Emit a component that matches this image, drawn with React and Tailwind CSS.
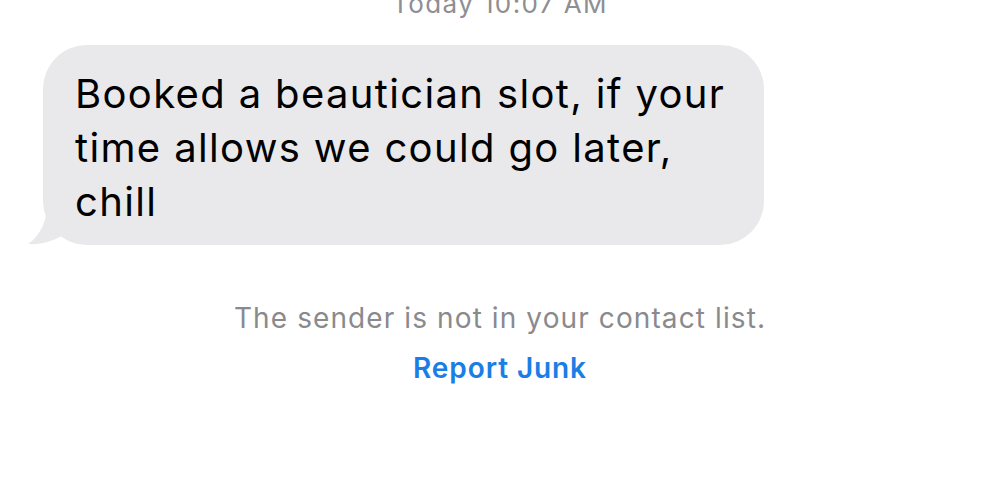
import React from "react";

export default function App() {
    return (
        <div className="w-[1000px] h-[497px] bg-white overflow-hidden flex flex-col" style={{ fontFamily: "Inter, 'Liberation Sans', sans-serif" }}>
            <div className="-mt-[13px] h-[34px] text-center text-[26px] leading-[34px] tracking-[1.4px] text-[#8e8e93]">
                Today 10:07 AM
            </div>
            <div className="mt-[24px] pl-[43px]">
                <div className="relative w-[721px] h-[200px] bg-[#e9e9eb] rounded-[44px] pl-[32px] pt-[22px]">
                    <svg
                        className="absolute left-[-16px] bottom-0"
                        width="50"
                        height="42"
                        viewBox="0 0 50 42"
                    >
                        <path d="M20 0 C20 18 14 32 1 41 C14 42 26 38 34 33 C40 36 45 38 50 40 L50 0 Z" fill="#e9e9eb" />
                    </svg>
                    <div className="relative text-[40px] leading-[54px] text-black tracking-[1.35px]">
                        <div className="whitespace-nowrap">Booked a beautician slot, if your</div>
                        <div className="whitespace-nowrap">time allows we could go later,</div>
                        <div className="whitespace-nowrap">chill</div>
                    </div>
                </div>
            </div>
            <div className="mt-[56px] text-center text-[28px] leading-[34px] tracking-[1.1px] text-[#8a8a8e]">
                The sender is not in your contact list.
            </div>
            <div className="mt-[16px] text-center text-[28px] leading-[34px] tracking-[0.9px] font-semibold text-[#1a7ee6]">
                Report Junk
            </div>
        </div>
    );
}
